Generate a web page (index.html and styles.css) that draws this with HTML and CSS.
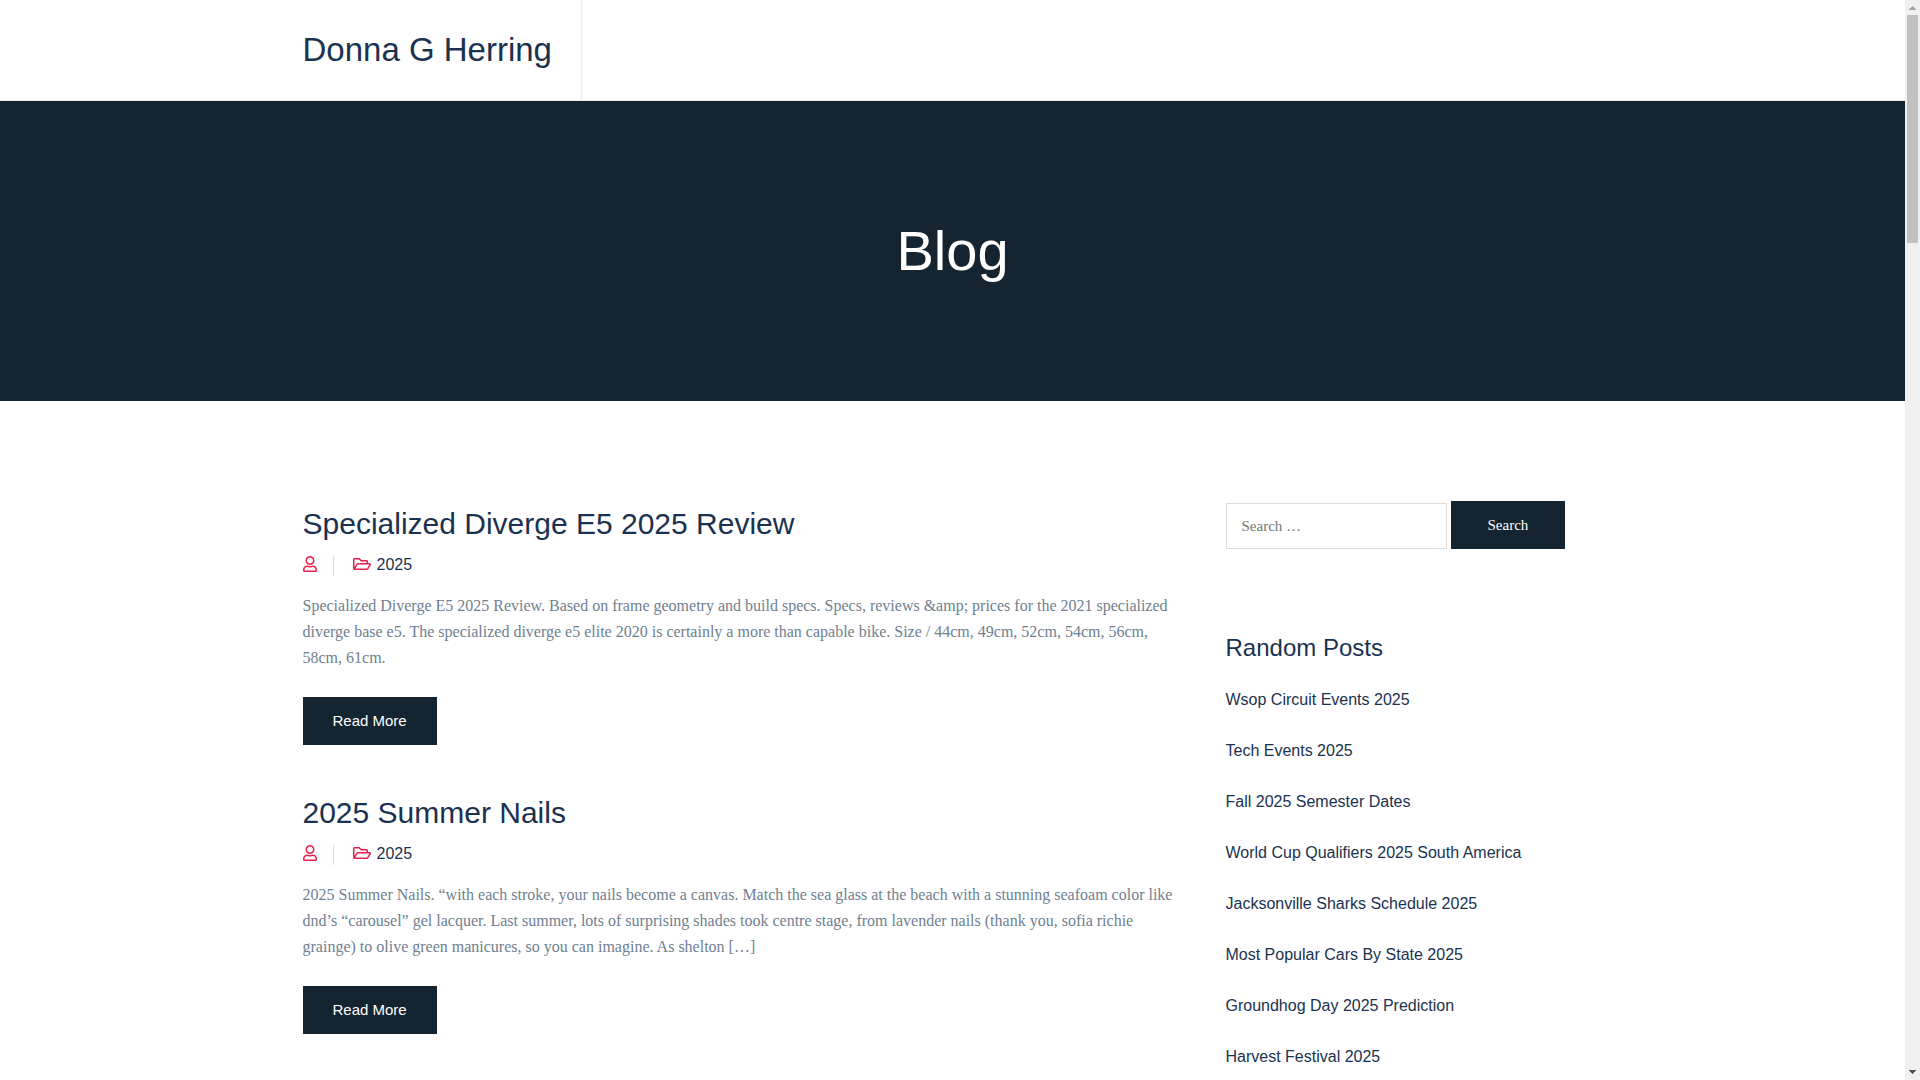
FILE: index.html
```html
<!DOCTYPE html>
<html lang="en">

<head>
    <meta charset="UTF-8">
    <meta name="viewport" content="width=device-width, initial-scale=1.0">
    <title>Donna G Herring</title>
    <link rel="stylesheet" href="styles.css">
</head>
<body>

<svg class="icon-defs" aria-hidden="true">
    <symbol id="icon-user" viewBox="0 0 448 512">
        <path d="M313.6 304c-28.7 0-42.5 16-89.6 16-47.1 0-60.8-16-89.6-16C60.2 304 0 364.2 0 438.4V464c0 26.5 21.5 48 48 48h352c26.5 0 48-21.5 48-48v-25.6c0-74.2-60.2-134.4-134.4-134.4zM400 464H48v-25.6c0-47.6 38.8-86.4 86.4-86.4 14.6 0 38.3 16 89.6 16 51.7 0 74.9-16 89.6-16 47.6 0 86.4 38.8 86.4 86.4V464zM224 288c79.5 0 144-64.5 144-144S303.5 0 224 0 80 64.5 80 144s64.5 144 144 144zm0-240c52.9 0 96 43.1 96 96s-43.1 96-96 96-96-43.1-96-96 43.1-96 96-96z"/>
    </symbol>
    <symbol id="icon-folder" viewBox="0 0 576 512">
        <path d="M527.9 224H480v-48c0-26.5-21.5-48-48-48H272l-64-64H48C21.5 64 0 85.5 0 112v288c0 26.5 21.5 48 48 48h400c16.5 0 31.9-8.5 40.7-22.6l79.9-128c20-31.9-3-73.4-40.7-73.4zM48 118c0-3.3 2.7-6 6-6h134.1l64 64H426c3.3 0 6 2.7 6 6v42H152c-16.8 0-32.4 8.8-41.1 23.2L48 351.4V118zm400 282H72l77.2-128.6c1.4-2.1 4-3.4 6.8-3.4H528l-80 132z"/>
    </symbol>
</svg>

<div class="page">
    <header class="site-header">
        <div class="container">
            <a class="site-title" href="#">Donna G Herring</a>
        </div>
    </header>

    <div class="page-banner">
        <h1>Blog</h1>
    </div>

    <div class="container content">
        <main class="posts">
            <article class="post">
                <h2><a href="#">Specialized Diverge E5 2025 Review</a></h2>
                <div class="post-meta">
                    <span class="meta-author"><svg class="icon-user"><use href="#icon-user"/></svg></span>
                    <span class="meta-category"><svg class="icon-folder"><use href="#icon-folder"/></svg><a href="#">2025</a></span>
                </div>
                <p>Specialized Diverge E5 2025 Review. Based on frame geometry and build specs. Specs, reviews &amp;amp; prices for the 2021 specialized diverge base e5. The specialized diverge e5 elite 2020 is certainly a more than capable bike. Size / 44cm, 49cm, 52cm, 54cm, 56cm, 58cm, 61cm.</p>
                <a class="read-more" href="#">Read More</a>
            </article>

            <article class="post">
                <h2><a href="#">2025 Summer Nails</a></h2>
                <div class="post-meta">
                    <span class="meta-author"><svg class="icon-user"><use href="#icon-user"/></svg></span>
                    <span class="meta-category"><svg class="icon-folder"><use href="#icon-folder"/></svg><a href="#">2025</a></span>
                </div>
                <p>2025 Summer Nails. “with each stroke, your nails become a canvas. Match the sea glass at the beach with a stunning seafoam color like dnd’s “carousel” gel lacquer. Last summer, lots of surprising shades took centre stage, from lavender nails (thank you, sofia richie grainge) to olive green manicures, so you can imagine. As shelton […]</p>
                <a class="read-more" href="#">Read More</a>
            </article>
        </main>

        <aside class="sidebar">
            <form class="search-form" role="search">
                <input type="search" class="search-field" placeholder="Search …" aria-label="Search for:">
                <button type="submit" class="search-submit">Search</button>
            </form>

            <h3>Random Posts</h3>
            <ul class="post-list">
                <li><a href="#">Wsop Circuit Events 2025</a></li>
                <li><a href="#">Tech Events 2025</a></li>
                <li><a href="#">Fall 2025 Semester Dates</a></li>
                <li><a href="#">World Cup Qualifiers 2025 South America</a></li>
                <li><a href="#">Jacksonville Sharks Schedule 2025</a></li>
                <li><a href="#">Most Popular Cars By State 2025</a></li>
                <li><a href="#">Groundhog Day 2025 Prediction</a></li>
                <li><a href="#">Harvest Festival 2025</a></li>
            </ul>
        </aside>
    </div>
</div>

<div class="scrollbar" aria-hidden="true">
    <svg class="scroll-arrow" viewBox="0 0 15 15" shape-rendering="crispEdges"><path fill="#a3a3a3" d="M7 6h1v1h1v1h1v1h1v1H4V9h1V8h1V7h1z"/></svg>
    <div class="scroll-track"><div class="scroll-thumb"></div></div>
    <svg class="scroll-arrow" viewBox="0 0 15 15" shape-rendering="crispEdges"><path fill="#505050" d="M4 5h7v1h-1v1H9v1H8v1H7V8H6V7H5V6H4z"/></svg>
</div>

</body>
</html>
```

FILE: styles.css
```css
* {
    box-sizing: border-box;
}

body {
    margin: 0;
    display: flex;
    height: 100vh;
    overflow: hidden;
    background-color: #fff;
    color: #708090;
    font-family: "Liberation Serif", "Times New Roman", serif;
    font-size: 16px;
    line-height: 26px;
}

a {
    color: #1a3250;
    text-decoration: none;
}

h1, h2, h3 {
    margin: 0;
    font-weight: 400;
}

h1, h2, h3, .site-title, .post-meta, .read-more, .post-list {
    font-family: "Liberation Sans", Arial, sans-serif;
}

.icon-defs {
    display: none;
}

.page {
    flex: 1;
    min-width: 0;
    overflow: hidden;
}

.container {
    max-width: 1330px;
    margin: 0 auto;
    padding: 0 15px;
}

/* header */
.site-header {
    border-bottom: 1px solid #eee;
}

.site-header .container {
    display: flex;
}

.site-title {
    padding: 0 29px 0 0;
    border-right: 1px solid #eee;
    font-size: 33px;
    line-height: 100px;
}

.page-banner {
    padding: 115px 15px;
    background-color: #142430;
    text-align: center;
}

.page-banner h1 {
    color: #fff;
    font-size: 56px;
    line-height: 70px;
}

/* content */
.content {
    display: grid;
    grid-template-columns: 1fr 377px;
    gap: 48px;
    padding-top: 100px;
}

.post {
    margin-bottom: 45px;
}

.post h2 {
    font-size: 30px;
    line-height: 46px;
}

.post-meta {
    display: flex;
    align-items: flex-end;
    height: 20px;
    margin: 9px 0 17px;
}

.meta-author, .meta-category {
    display: flex;
    height: 20px;
}

.meta-author {
    padding-right: 16px;
    margin-right: 19px;
    border-right: 1px solid #ddd;
}

.meta-category {
    gap: 6px;
    line-height: 18px;
}

.icon-user, .icon-folder {
    width: 14px;
    height: 16px;
    fill: #e9204f;
}

.icon-folder {
    width: 18px;
}

.post p {
    margin: 0 0 26px;
}

.read-more {
    display: inline-block;
    padding: 0 30px;
    background-color: #142430;
    color: #fff;
    font-size: 15px;
    line-height: 48px;
    vertical-align: top;
}

/* sidebar */
.search-form {
    display: flex;
    align-items: flex-end;
    gap: 4px;
    margin-bottom: 80px;
}

.search-field {
    width: 221px;
    height: 46px;
    padding: 0 15px;
    border: 1px solid #ddd;
    border-radius: 0;
    background-color: #fff;
    font-family: inherit;
    font-size: 15px;
    appearance: none;
}

.search-submit {
    height: 48px;
    padding: 0 37px;
    border: 0;
    background-color: #142430;
    color: #fff;
    font-family: inherit;
    font-size: 15px;
    cursor: pointer;
}

.sidebar h3 {
    color: #1a3250;
    font-size: 24px;
    line-height: 38px;
    margin-bottom: 20px;
}

.post-list {
    margin: 0;
    padding: 0;
    list-style: none;
}

.post-list li {
    margin-bottom: 25px;
}

/* scrollbar */
.scrollbar {
    display: flex;
    flex-direction: column;
    width: 15px;
    background-color: #f0f0f0;
}

.scroll-arrow {
    display: block;
    height: 15px;
}

.scroll-track {
    flex: 1;
    padding: 0 2px;
}

.scroll-thumb {
    height: 228px;
    background-color: #c1c1c1;
}
```
